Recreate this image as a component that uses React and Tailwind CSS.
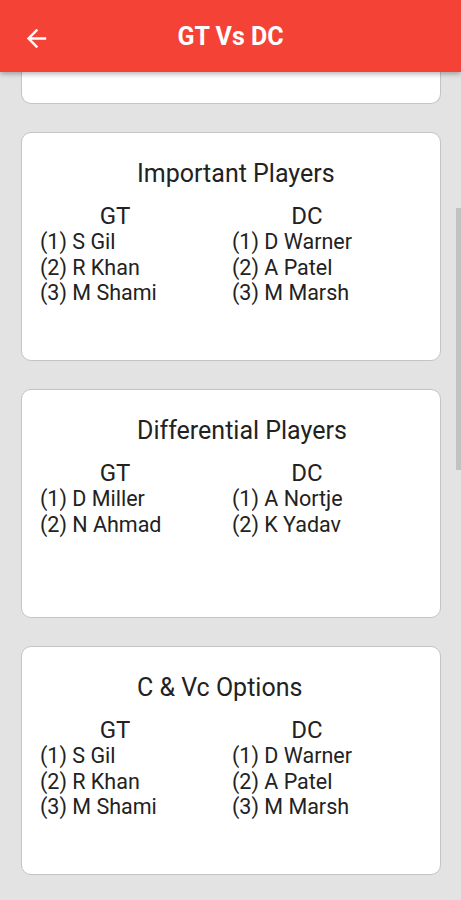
const teams = { left: "GT", right: "DC" };

const sections = [
  {
    title: "Important Players",
    left: ["S Gil", "R Khan", "M Shami"],
    right: ["D Warner", "A Patel", "M Marsh"],
  },
  {
    title: "Differential Players",
    left: ["D Miller", "N Ahmad"],
    right: ["A Nortje", "K Yadav"],
  },
  {
    title: "C & Vc Options",
    left: ["S Gil", "R Khan", "M Shami"],
    right: ["D Warner", "A Patel", "M Marsh"],
  },
];

function TeamColumn({ name, players }) {
  return (
    <div className="w-[150px] flex flex-col">
      <div className="text-center text-[24px] leading-[26px]">{name}</div>
      {players.map((p, i) => (
        <div key={p} className="text-[21.5px] leading-[25.5px] whitespace-nowrap">
          ({i + 1}) {p}
        </div>
      ))}
    </div>
  );
}

function Card({ title, left, right }) {
  return (
    <div className="h-[229px] bg-white border border-[#c4c4c4] rounded-[10px] pt-[27px] pl-[18px] shrink-0">
      <div className="pl-[97px] text-[25px] leading-[28px] mb-[15px]">{title}</div>
      <div className="flex gap-[42px]">
        <TeamColumn name={teams.left} players={left} />
        <TeamColumn name={teams.right} players={right} />
      </div>
    </div>
  );
}

export default function App() {
  return (
    <div className="relative w-[461px] h-[900px] overflow-hidden bg-[#e3e3e3] text-[#222222] font-['Roboto',sans-serif]">
      {/* Toolbar */}
      <div className="relative z-10 h-[72px] bg-[#f44336] flex items-center justify-center shadow-[0_2px_5px_rgba(0,0,0,0.3)]">
        <svg className="absolute left-[22px] top-[24px]" width="29" height="29" viewBox="0 0 24 24" fill="#ffffff">
          <path d="M20 11H7.83l5.59-5.59L12 4l-8 8 8 8 1.41-1.41L7.83 13H20v-2z" />
        </svg>
        <h1 className="text-white font-bold text-[25px] leading-none">GT Vs DC</h1>
      </div>

      {/* Scrolled content */}
      <div className="flex flex-col gap-[28px] pl-[21px] pr-[20px]">
        <div className="h-[32px] bg-white border border-t-0 border-[#c4c4c4] rounded-b-[10px]" />
        {sections.map((s) => (
          <Card key={s.title} {...s} />
        ))}
      </div>

      {/* Scrollbar */}
      <div className="absolute right-0 top-[208px] w-[5px] h-[262px] bg-[#c2c2c2]" />
    </div>
  );
}
